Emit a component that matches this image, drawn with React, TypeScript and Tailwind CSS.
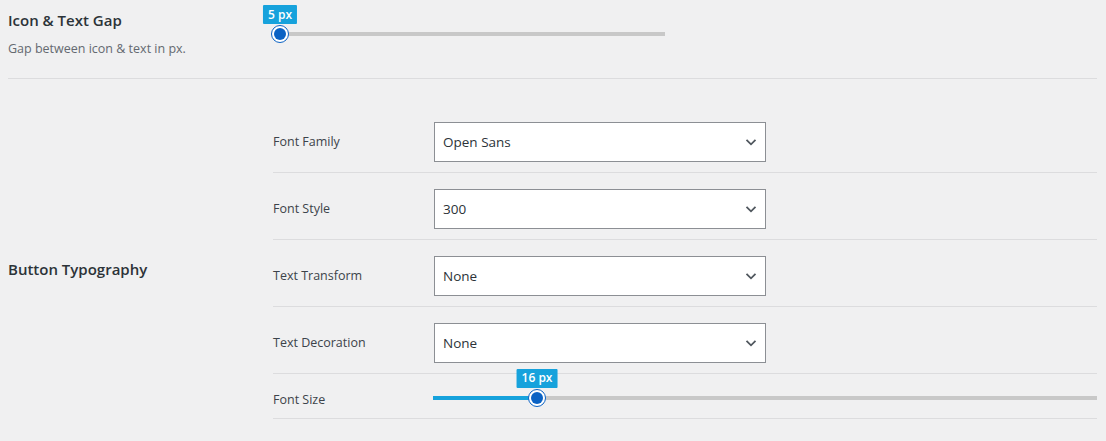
import React from "react";

const font = { fontFamily: '"Open Sans", "Noto Sans", sans-serif' };

function Chevron() {
  return (
    <svg width="12" height="8" viewBox="0 0 12 8" className="absolute right-[8px] top-1/2 -translate-y-1/2" fill="none">
      <path d="M1.5 1.8l4.5 4.5 4.5-4.5" stroke="#50575e" strokeWidth="1.8" />
    </svg>
  );
}

function Select({ value }: { value: string }) {
  return (
    <div className="relative w-[332px] h-[40px] bg-white border border-[#8c8f94] flex items-center pl-[8px] text-[13.5px] text-[#2c3338]">
      {value}
      <Chevron />
    </div>
  );
}

function Knob() {
  return (
    <div className="w-[18px] h-[18px] rounded-full border border-[#0a62c4] bg-white flex items-center justify-center">
      <div className="w-[12px] h-[12px] rounded-full bg-[#0a62c4]" />
    </div>
  );
}

function Badge({ text }: { text: string }) {
  return (
    <div className="absolute bottom-[19px] left-1/2 -translate-x-1/2 h-[19px] px-[5px] bg-[#16a2dc] text-white text-[12px] font-semibold flex items-center whitespace-nowrap rounded-[1px]">
      {text}
    </div>
  );
}

function Slider({ width, pos, fill }: { width: number | string; pos: number; fill: boolean }) {
  return (
    <div className="relative h-[18px] flex items-center" style={{ width }}>
      <div className="w-full h-[4px] bg-[#c8c8c8]" />
      {fill && <div className="absolute left-0 h-[4px] bg-[#16a2dc]" style={{ width: pos }} />}
      <div className="absolute top-0" style={{ left: pos - 9 }}>
        <div className="relative">
          <Badge text={fill ? "16 px" : "5 px"} />
          <Knob />
        </div>
      </div>
    </div>
  );
}

function Row({ label, children, last }: { label: string; children: React.ReactNode; last?: boolean }) {
  return (
    <div className={`flex items-center border-b border-[#dcdcde] ${last ? "h-[45px]" : "pt-[16px] pb-[10px]"}`}>
      <div className={`w-[161px] text-[12.5px] text-[#3c434a] ${last ? "pt-[8px]" : "pt-[1px]"}`}>{label}</div>
      <div className="flex-1">{children}</div>
    </div>
  );
}

export default function App() {
  return (
    <div className="w-[1106px] h-[441px] overflow-hidden bg-[#f0f0f1] pl-[8px] pr-[9px]" style={font}>
      <div className="flex border-b border-[#dcdcde] h-[79px]">
        <div className="w-[265px] pt-[9px]">
          <div className="text-[15px] font-semibold text-[#2c3338] leading-[22px]">Icon &amp; Text Gap</div>
          <div className="text-[12.5px] text-[#646970] mt-[8px] leading-[20px]">Gap between icon &amp; text in px.</div>
        </div>
        <div className="pt-[25px]">
          <Slider width={392} pos={7} fill={false} />
        </div>
      </div>
      <div className="flex">
        <div className="w-[265px] pt-[179px]">
          <div className="text-[15px] font-semibold text-[#2c3338] leading-[22px]">Button Typography</div>
        </div>
        <div className="flex-1 pt-[27px]">
          <Row label="Font Family"><Select value="Open Sans" /></Row>
          <Row label="Font Style"><Select value="300" /></Row>
          <Row label="Text Transform"><Select value="None" /></Row>
          <Row label="Text Decoration"><Select value="None" /></Row>
          <Row label="Font Size" last>
            <div className="pt-[3px] ml-[-1px]">
              <Slider width="100%" pos={104} fill={true} />
            </div>
          </Row>
        </div>
      </div>
    </div>
  );
}
